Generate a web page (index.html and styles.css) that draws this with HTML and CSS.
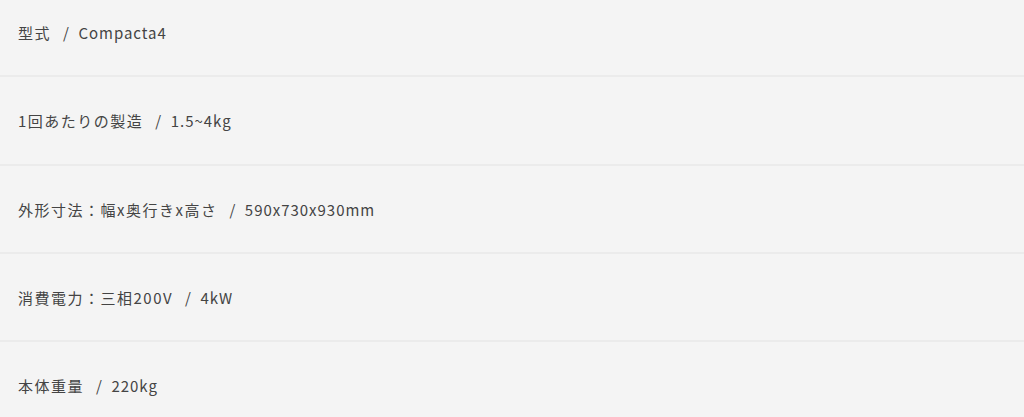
FILE: index.html
```html
<!DOCTYPE html>
<html lang="ja">
<head>
<meta charset="utf-8">
<link rel="stylesheet" href="styles.css">
</head>
<body>
<ul class="spec-list">
  <li class="spec-row"><span class="spec-label">型式</span><span class="spec-sep">/</span><span class="spec-value">Compacta4</span></li>
  <li class="spec-row"><span class="spec-label">1回あたりの製造</span><span class="spec-sep">/</span><span class="spec-value">1.5~4kg</span></li>
  <li class="spec-row"><span class="spec-label">外形寸法：幅x奥行きx高さ</span><span class="spec-sep">/</span><span class="spec-value">590x730x930mm</span></li>
  <li class="spec-row"><span class="spec-label">消費電力：三相200V</span><span class="spec-sep">/</span><span class="spec-value">4kW</span></li>
  <li class="spec-row"><span class="spec-label">本体重量</span><span class="spec-sep">/</span><span class="spec-value">220kg</span></li>
</ul>
</body>
</html>
```

FILE: styles.css
```css
html, body {
  margin: 0;
  padding: 0;
  background: #f4f4f4;
}

body {
  font-family: "Noto Sans CJK JP", "Noto Sans", sans-serif;
  font-size: 15px;
  color: #444;
  letter-spacing: 0.1em;
  overflow: hidden;
}

.spec-list {
  list-style: none;
  margin: -11px 0 0;
  padding: 0;
}

.spec-row {
  display: flex;
  align-items: center;
  height: 84.3px;
  padding: 2px 18px 0;
  border-bottom: 2px solid #ebebeb;
  line-height: 28px;
}

.spec-sep {
  margin: 0 8px 0 12px;
}

.spec-value {
  letter-spacing: 0.065em;
}
```
